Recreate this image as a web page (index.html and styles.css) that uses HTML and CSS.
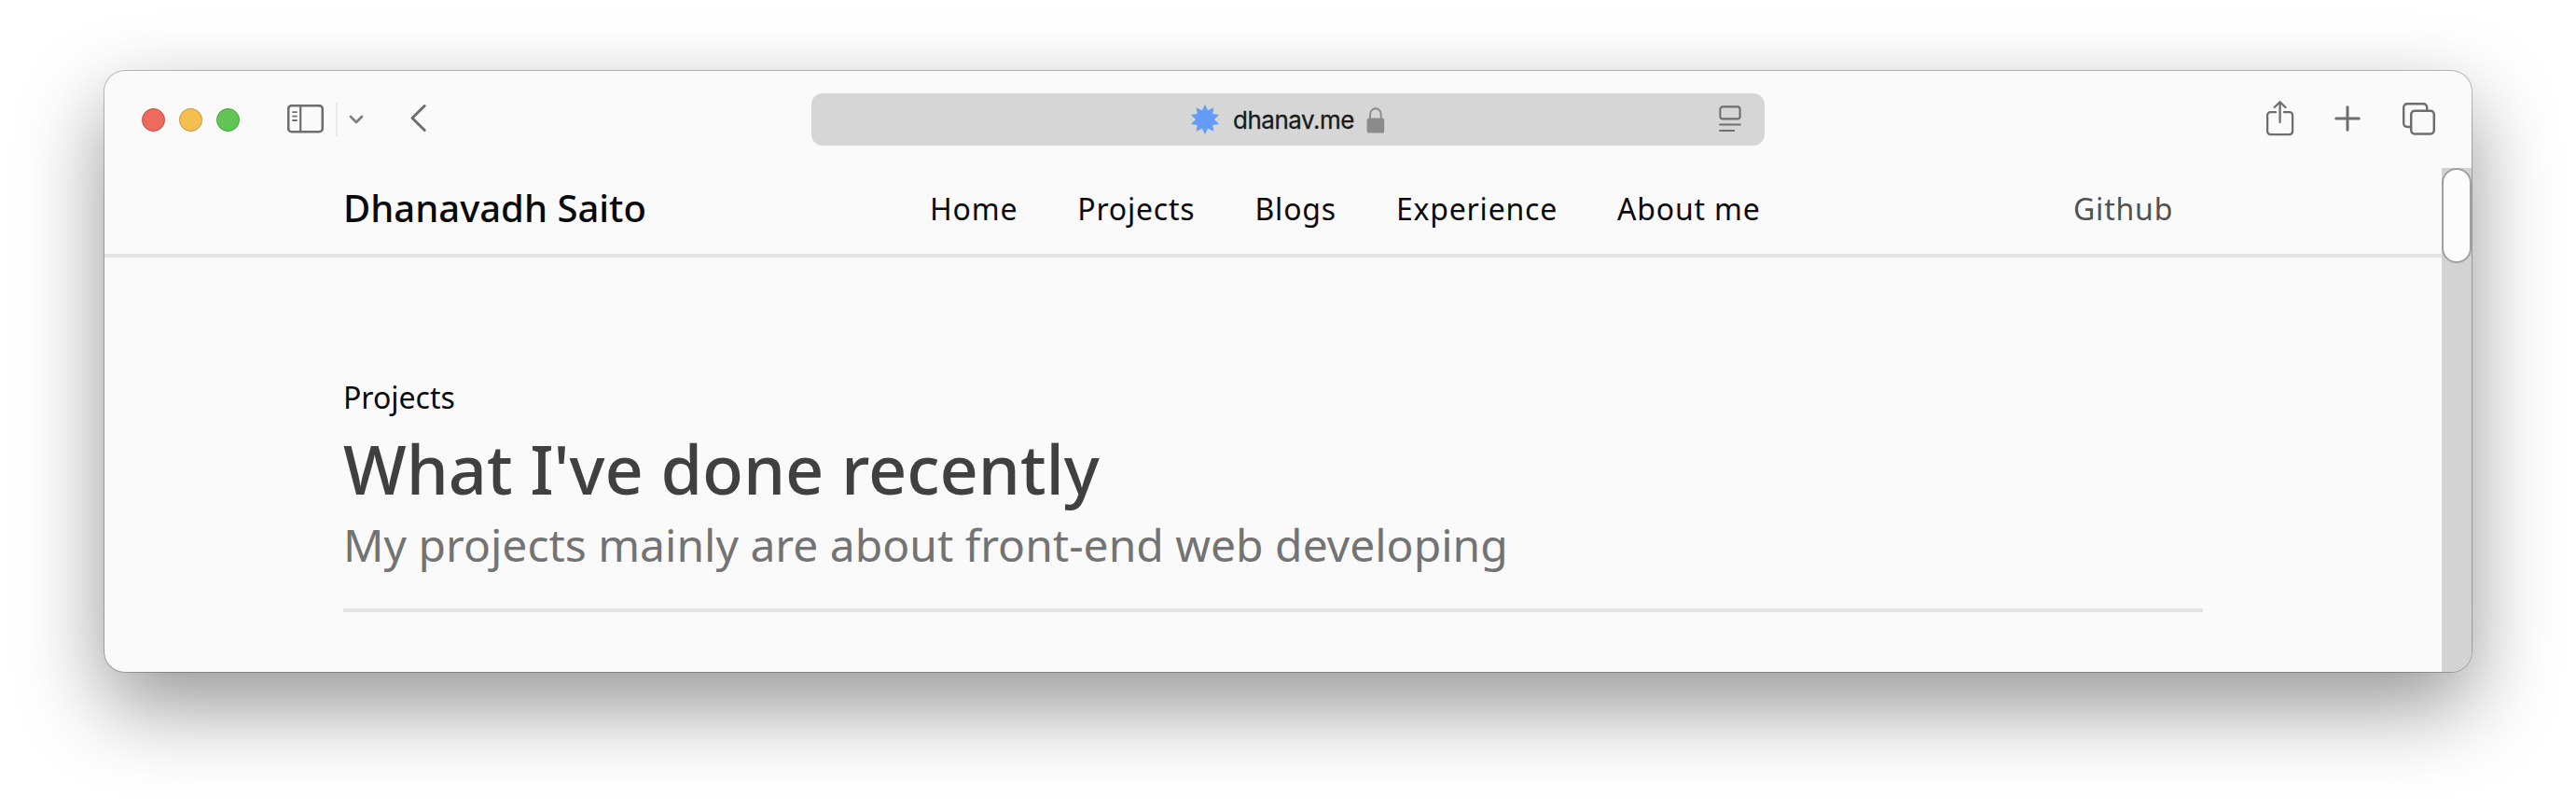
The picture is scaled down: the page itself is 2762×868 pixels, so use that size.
FILE: index.html
```html
<!DOCTYPE html>
<html lang="en">
<head>
<meta charset="utf-8">
<title>Dhanavadh Saito</title>
<link rel="stylesheet" href="styles.css">
</head>
<body>
<div class="window">
  <div class="toolbar">
    <div class="side">
      <div class="lights">
        <span class="light red"></span>
        <span class="light yellow"></span>
        <span class="light green"></span>
      </div>
      <svg class="icon sidebar" width="40" height="32" viewBox="0 0 40 32"><rect x="1.2" y="1.2" width="36.6" height="28" rx="3.5" stroke-width="2.6"/><path d="M14.2 1.5V29" stroke-width="2.2"/><path d="M6 8.2h4M6 12.6h4M6 17h4" stroke-width="1.8"/></svg>
      <span class="divider"></span>
      <svg class="icon chevron" width="16" height="12" viewBox="0 0 16 12"><path d="M2 3l6 6 6-6" stroke-width="2.8"/></svg>
      <svg class="icon back" width="20" height="32" viewBox="0 0 20 32"><path d="M16.2 2.5L3 15.500l13.200 13" stroke-width="3"/></svg>
    </div>
    <div class="address">
      <svg class="star" width="32" height="32" viewBox="-16 -16 32 32"><path d="M0-15.200L2.900-9 8.900-12.300 7.700-5.600 14.500-4.700 9.500 0 14.500 4.700 7.700 5.600 8.900 12.300 2.900 9 0 15.200-2.900 9-8.900 12.300-7.700 5.600-14.500 4.700-9.500 0-14.500-4.700-7.700-5.600-8.900-12.300-2.900-9z"/></svg>
      <span class="domain">dhanav.me</span>
      <svg class="lock" width="20" height="28" viewBox="0 0 20 28"><rect x=".6" y="11.4" width="18.6" height="16.2" rx="2.6" fill="#8b8b8b"/><path d="M4.1 12V7.500a5.800 6.300 0 0 1 11.600 0V12" fill="none" stroke="#8b8b8b" stroke-width="1.9"/></svg>
      <svg class="icon reader" width="24" height="30" viewBox="0 0 24 30"><rect x="1.4" y="1.4" width="21.2" height="13" rx="2.6" stroke-width="2.1"/><path d="M1.200 20.500h21.600M1.200 27h15" stroke-width="2.1"/></svg>
    </div>
    <div class="actions">
      <svg class="icon share" width="30" height="38" viewBox="0 0 30 38"><path d="M10 12.200H4.400a3.300 3.300 0 0 0-3.300 3.300v17.300a3.300 3.300 0 0 0 3.300 3.300h20.400a3.300 3.300 0 0 0 3.300-3.300V15.500a3.300 3.300 0 0 0-3.300-3.300H19M14.600 23V1.800M8.700 7l5.900-5.800L20.500 7" stroke-width="2.3"/></svg>
      <svg class="icon plus" width="28" height="28" viewBox="0 0 28 28"><path d="M14 1.800v24.400M1.800 14h24.400" stroke-width="3"/></svg>
      <svg class="icon tabs" width="36" height="36" viewBox="0 0 36 36"><path d="M9 26H5a3.800 3.800 0 0 1-3.800-3.800V5A3.800 3.800 0 0 1 5 1.200h17.400a3.800 3.800 0 0 1 3.800 3.800v3" stroke-width="2.4"/><rect x="9.200" y="8.800" width="24.600" height="24.600" rx="3.800" stroke-width="2.500"/></svg>
    </div>
  </div>
  <div class="view">
    <div class="page">
      <header class="header">
        <a class="brand">Dhanavadh Saito</a>
        <nav class="nav"><a>Home</a><a>Projects</a><a>Blogs</a><a>Experience</a><a>About me</a></nav>
        <a class="github">Github</a>
      </header>
      <main class="intro">
        <p class="label">Projects</p>
        <h1 class="title">What I've done recently</h1>
        <p class="subtitle">My projects mainly are about front-end web developing</p>
      </main>
    </div>
    <div class="scrollbar"><div class="thumb"></div></div>
  </div>
</div>
</body>
</html>
```
FILE: styles.css
```css
* { box-sizing: border-box; }
body {
  margin: 0;
  height: 868px;
  padding: 76px 112px 148px;
  overflow: hidden;
  background: #fff;
  font-family: "Noto Sans", sans-serif;
}
.window {
  width: 2538px;
  height: 644px;
  border-radius: 22px;
  overflow: hidden;
  background: #fafafa;
  box-shadow: 0 0 0 1px rgba(0, 0, 0, .24), 0 36px 90px rgba(0, 0, 0, .42);
}
.toolbar {
  display: grid;
  grid-template-columns: 758px 1022px 1fr;
  height: 104px;
}
.side { display: flex; align-items: center; padding-left: 39.5px; }
.lights { display: flex; gap: 15px; }
.light { width: 25px; height: 25px; border-radius: 50%; border: 1px solid; }
.red { background: #ec6a5e; border-color: #c9483e; }
.yellow { background: #f5bf4f; border-color: #c6923a; }
.green { background: #61c554; border-color: #45a03a; }
.icon { fill: none; stroke: #6e6e6e; stroke-linecap: round; stroke-linejoin: round; flex: none; }
.sidebar { margin-left: 51.5px; }
.divider { width: 2px; height: 36px; margin-left: 12px; background: #ececec; }
.chevron { margin-left: 12px; stroke: #808080; }
.back { margin: 0 0 2px 49px; }
.address {
  display: flex;
  align-items: center;
  height: 56px;
  margin-top: 24px;
  padding-left: 406px;
  border-radius: 12px;
  background: #d6d6d6;
}
.star { fill: #629bf8; stroke: #629bf8; stroke-width: .8; stroke-linejoin: round; }
.domain {
  width: 143px;
  padding-top: 2px;
  margin-left: 14px;
  font: 400 26px/32px Inter, sans-serif;
  letter-spacing: -.5px;
  color: #1a1a1a;
  -webkit-text-stroke: .3px #1a1a1a;
}
.lock { margin-top: 1px; }
.reader { margin-left: 358px; }
.actions { display: flex; align-items: center; padding-left: 538px; }
.share { margin-bottom: 2px; }
.plus { margin: 0 0 3px 43px; }
.tabs { margin: 0 0 1px 45px; }
.view { display: flex; height: 540px; }
.page { flex: 1; }
.header {
  display: flex;
  align-items: center;
  height: 96px;
  padding: 0 0 6px 256px;
  border-bottom: 4px solid #e4e4e4;
  font-size: 32px;
  letter-spacing: .8px;
  color: #0a0a0a;
}
.brand { width: 629px; padding-bottom: 2px; font-size: 40px; font-weight: 500; letter-spacing: 0; }
.nav { display: flex; gap: 64px; width: 1226px; }
.github { color: #525252; }
.intro {
  width: 1994px;
  height: 380px;
  margin-left: 256px;
  padding-top: 126px;
  border-bottom: 4px solid #e4e4e4;
}
.label, .title, .subtitle { margin: 0; font-weight: 400; }
.label { font-size: 32px; line-height: 48px; color: #0a0a0a; }
.title { margin-top: 16px; font-size: 72px; line-height: 72px; font-weight: 500; letter-spacing: -.05px; color: #404040; }
.subtitle { margin-top: 22px; font-size: 48px; line-height: 48px; color: #737373; }
.scrollbar { width: 32px; background: #d3d3d3; }
.thumb { height: 102px; border: 2px solid #9f9f9f; border-radius: 16px; background: #fcfcfc; }
```
